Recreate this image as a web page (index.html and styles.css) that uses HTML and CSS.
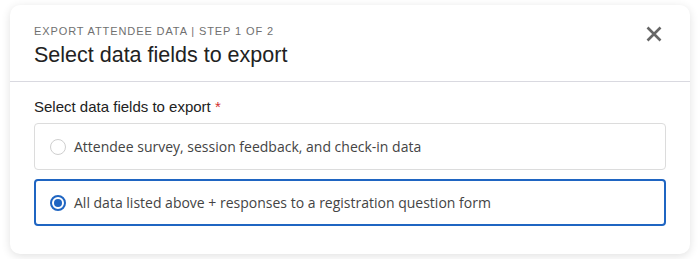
FILE: index.html
```html
<!DOCTYPE html>
<html lang="en">
<head>
  <meta charset="UTF-8" />
  <title>Export attendee data</title>
  <link rel="stylesheet" href="styles.css">
</head>
<body>
  <div class="modal">
    <div class="modal-header">
      <div class="heading">
        <div class="eyebrow">Export attendee data | Step 1 of 2</div>
        <h1 class="title">Select data fields to export</h1>
      </div>
      <button class="close" type="button" aria-label="Close">
        <svg width="16" height="16" viewBox="0 0 16 16">
          <path d="M1.5 1.5 L14.5 14.5 M14.5 1.5 L1.5 14.5" stroke="#666" stroke-width="2.6" fill="none"/>
        </svg>
      </button>
    </div>

    <div class="modal-body">
      <div class="field-label">Select data fields to export <span class="req">*</span></div>
      <label class="option">
        <input type="radio" name="fields" />
        <span class="radio"></span>
        <span class="option-text">Attendee survey, session feedback, and check-in data</span>
      </label>
      <label class="option selected">
        <input type="radio" name="fields" checked />
        <span class="radio"></span>
        <span class="option-text">All data listed above + responses to a registration question form</span>
      </label>
    </div>
  </div>
</body>
</html>
```

FILE: styles.css
```css
body {
  margin: 0;
  padding: 5px 10px;
  background: #ffffff;
  font-family: "Liberation Sans", Arial, sans-serif;
}

.modal {
  width: 680px;
  background: #fff;
  border-radius: 10px;
  box-shadow: 0 2px 10px rgba(0,0,0,0.12);
}

.modal-header {
  display: flex;
  justify-content: space-between;
  align-items: flex-start;
  padding: 18px 24px 12px 24px;
  border-bottom: 1px solid #d9d9e0;
}

.eyebrow {
  font-size: 11px;
  letter-spacing: 0.9px;
  text-transform: uppercase;
  color: #707070;
  line-height: 16px;
}

.title {
  margin: 3px 0 0 0;
  font-size: 21.5px;
  font-weight: normal;
  color: #222;
  line-height: 27px;
}

.close {
  border: none;
  background: none;
  padding: 0;
  margin: 3px 4px 0 0;
  cursor: pointer;
  display: flex;
}

.modal-body {
  display: flex;
  flex-direction: column;
  gap: 9px;
  padding: 16px 24px 28px 24px;
}

.field-label {
  font-size: 15px;
  color: #222;
  line-height: 17px;
  margin-bottom: -1px;
}

.req {
  color: #d32f2f;
}

.option {
  display: flex;
  align-items: center;
  gap: 8px;
  height: 47px;
  box-sizing: border-box;
  padding: 0 15px;
  border: 1px solid #dcdcdc;
  border-radius: 4px;
  cursor: pointer;
}

.option input {
  display: none;
}

.radio {
  width: 16px;
  height: 16px;
  box-sizing: border-box;
  border-radius: 50%;
  border: 1px solid #cfcfcf;
  background: #fff;
  display: flex;
  align-items: center;
  justify-content: center;
}

.option-text {
  font-family: "Open Sans", sans-serif;
  font-size: 14px;
  color: #444;
}

.option.selected {
  border: 2px solid #1f65c2;
  padding: 0 14px;
}

.option.selected .radio {
  border: 2px solid #1f65c2;
}

.option.selected .radio::after {
  content: "";
  width: 8px;
  height: 8px;
  border-radius: 50%;
  background: #1f65c2;
}
```
